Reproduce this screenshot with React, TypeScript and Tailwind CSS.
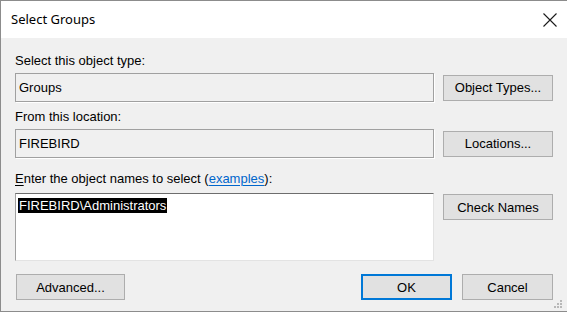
import type { ReactNode } from "react";

const ui = "font-['Liberation_Sans',Arial,sans-serif] text-[13px] text-black";

function Button({ children, primary, className = "" }: { children: ReactNode; primary?: boolean; className?: string }) {
  return (
    <button
      className={`flex h-[26px] items-center justify-center bg-[#e1e1e1] leading-none ${
        primary ? "border-2 border-[#0078d7]" : "border border-[#adadad]"
      } ${className}`}
    >
      {children}
    </button>
  );
}

function ReadOnlyBox({ value }: { value: string }) {
  return (
    <div className="flex h-[29px] w-[419px] items-center border border-[#a0a0a0] bg-[#f0f0f0] pl-[3px] shadow-[1px_1px_0_#ffffff]">
      {value}
    </div>
  );
}

function CloseIcon() {
  return (
    <svg width="14" height="14" viewBox="0 0 14 14" className="mr-[10px]">
      <path d="M0.5 0.5 L13.5 13.5 M13.5 0.5 L0.5 13.5" stroke="#1a1a1a" strokeWidth="1.1" />
    </svg>
  );
}

function Grip() {
  const dots = [
    [6, 0],
    [3, 3],
    [6, 3],
    [0, 6],
    [3, 6],
    [6, 6],
  ];
  return (
    <svg width="8" height="8" viewBox="0 0 8 8" className="absolute bottom-[3px] right-[5px]">
      {dots.map(([x, y]) => (
        <rect key={`${x}-${y}`} x={x} y={y} width="2" height="2" fill="#b8b8b8" />
      ))}
    </svg>
  );
}

export default function App() {
  return (
    <div className={`relative flex h-[312px] w-[567px] flex-col border-t border-b border-l border-[#8c8c8c] bg-[#f0f0f0] ${ui}`}>
      <div className="flex h-[37px] items-center justify-between bg-white pl-[10px]">
        <span className="font-['Noto_Sans',sans-serif] text-[13px] text-black">Select Groups</span>
        <CloseIcon />
      </div>

      <div className="flex flex-col pl-[14px]">
        <div className="mt-[16px] h-[14px] leading-[14px]">Select this object type:</div>
        <div className="mt-[5px] flex items-center gap-[9px]">
          <ReadOnlyBox value="Groups" />
          <Button className="w-[110px]">Object Types...</Button>
        </div>

        <div className="mt-[8px] h-[14px] leading-[14px]">From this location:</div>
        <div className="mt-[5px] flex items-center gap-[9px]">
          <ReadOnlyBox value="FIREBIRD" />
          <Button className="w-[110px]">Locations...</Button>
        </div>

        <div className="mt-[14px] h-[14px] leading-[14px]">
          <span className="underline decoration-1 underline-offset-2">E</span>nter the object names to select (
          <span className="text-[#0066cc] underline decoration-1 underline-offset-2">examples</span>):
        </div>
        <div className="mt-[7px] flex items-start gap-[9px]">
          <div className="h-[68px] w-[419px] border-t border-l border-r border-b border-t-[#6d6d6d] border-l-[#a0a0a0] border-r-[#e3e3e3] border-b-[#e3e3e3] bg-white pl-[2px] pt-[2px]">
            <span className="inline-block bg-black px-[1px] leading-[15px] text-white">FIREBIRD\Administrators</span>
          </div>
          <Button className="mt-[1px] w-[110px]">Check Names</Button>
        </div>

        <div className="mt-[13px] flex items-center">
          <Button className="ml-[1px] w-[109px]">Advanced...</Button>
          <Button primary className="ml-[236px] w-[91px]">OK</Button>
          <Button className="ml-[10px] w-[91px]">Cancel</Button>
        </div>
      </div>

      <Grip />
    </div>
  );
}
